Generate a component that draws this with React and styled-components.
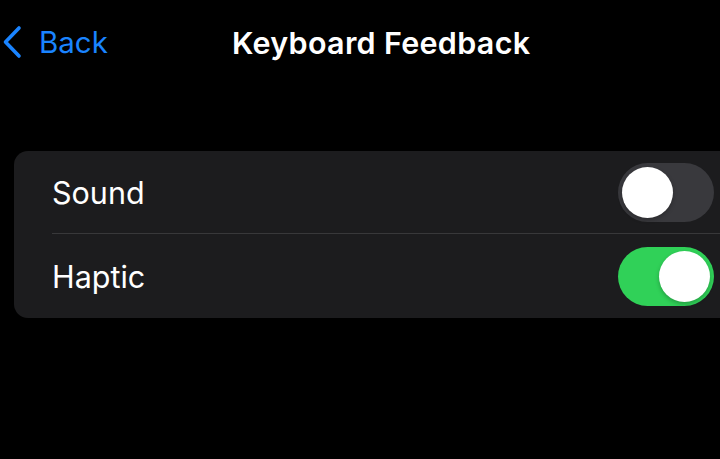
import React, { useState } from "react";
import styled, { createGlobalStyle } from "styled-components";

const GlobalStyle = createGlobalStyle`
  html, body {
    margin: 0;
    padding: 0;
    background: #000000;
    overflow: hidden;
  }
  body {
    font-family: Inter, "Liberation Sans", sans-serif;
    color: #ffffff;
  }
`

const Screen = styled.div`
  width: 720px;
  height: 459px;
  background: #000000;
  display: flex;
  flex-direction: column;
`

const NavBar = styled.div`
  height: 86px;
  display: flex;
  align-items: center;
  padding-bottom: 2px;
  box-sizing: border-box;
`

const BackButton = styled.button`
  display: flex;
  align-items: center;
  gap: 17px;
  background: none;
  border: none;
  padding: 0 0 0 2px;
  color: #1a84ff;
  font-family: Inter, "Liberation Sans", sans-serif;
  font-size: 29.5px;
  cursor: pointer;
`

const Title = styled.h1`
  margin: 0 0 0 124px;
  font-size: 30.5px;
  font-weight: 600;
  letter-spacing: 0.3px;
`

const Card = styled.div`
  margin: 65px -30px 0 14px;
  background: #1c1c1e;
  border-radius: 14px;
  overflow: hidden;
`

const Row = styled.div`
  height: ${p => p.$h}px;
  display: flex;
  align-items: center;
  justify-content: space-between;
  padding: 0 36px 0 38px;
  position: relative;
  box-sizing: border-box;
  &:not(:last-child)::after {
    content: "";
    position: absolute;
    left: 38px;
    right: 0;
    bottom: 0;
    height: 1px;
    background: #38383a;
  }
`

const Label = styled.span`
  font-size: 30.5px;
  font-weight: 400;
`

const Track = styled.button`
  width: 96px;
  height: 59px;
  border-radius: 30px;
  border: none;
  padding: 4px;
  display: flex;
  justify-content: ${p => (p.$on ? "flex-end" : "flex-start")};
  background: ${p => (p.$on ? "#30d158" : "#39393d")};
  cursor: pointer;
  box-sizing: border-box;
`

const Knob = styled.span`
  width: 51px;
  height: 51px;
  border-radius: 50%;
  background: #ffffff;
  box-shadow: 0 2px 4px rgba(0, 0, 0, 0.25);
`

const Toggle = ({ on, onChange }) => (
  <Track $on={on} onClick={() => onChange(!on)}>
    <Knob />
  </Track>
)

const Chevron = () => (
  <svg width="20" height="34" viewBox="0 0 20 34" fill="none">
    <path d="M17 3 L3.5 17 L17 31" stroke="#1a84ff" strokeWidth="3.6" strokeLinecap="round" strokeLinejoin="round" />
  </svg>
)

export default function App() {
  const [sound, setSound] = useState(false);
  const [haptic, setHaptic] = useState(true);

  return (
    <Screen>
      <GlobalStyle />
      <NavBar>
        <BackButton>
          <Chevron />
          Back
        </BackButton>
        <Title>Keyboard Feedback</Title>
      </NavBar>
      <Card>
        <Row $h={83}>
          <Label>Sound</Label>
          <Toggle on={sound} onChange={setSound} />
        </Row>
        <Row $h={84}>
          <Label>Haptic</Label>
          <Toggle on={haptic} onChange={setHaptic} />
        </Row>
      </Card>
    </Screen>
  );
}
